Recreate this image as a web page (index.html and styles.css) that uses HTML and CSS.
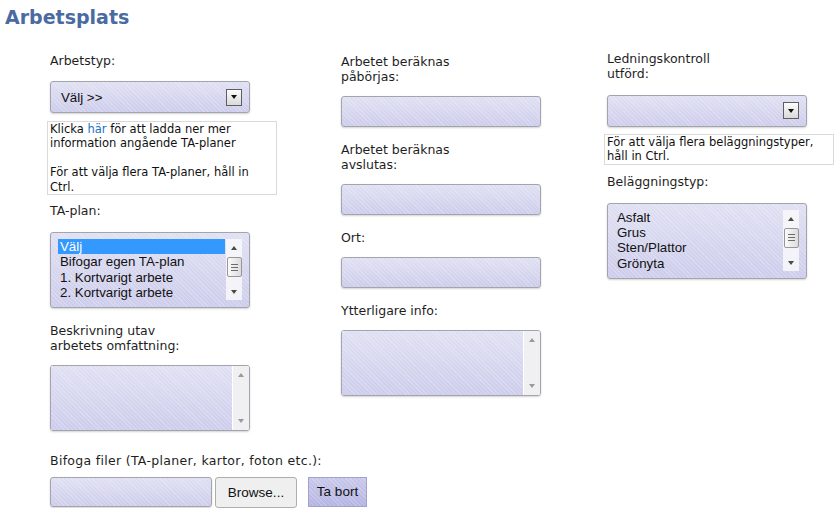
FILE: index.html
```html
<!DOCTYPE html>
<html lang="sv">
<head>
<meta charset="utf-8">
<title>Arbetsplats</title>
<link rel="stylesheet" href="styles.css">
</head>
<body>
<h1 class="title">Arbetsplats</h1>
<div class="form">
  <div class="col col-left">
    <div class="lbl mb13">Arbetstyp:</div>
    <div class="select mb8">
      <span class="select-text">Välj &gt;&gt;</span>
      <span class="drop"><i></i></span>
    </div>
    <div class="info mb8">Klicka <a class="link" href="#">här</a> för att ladda ner mer information angående TA-planer<br><br>För att välja flera TA-planer, håll in Ctrl.</div>
    <div class="lbl mb14">TA-plan:</div>
    <div class="listbox mb15">
      <ul class="options">
        <li class="opt selected">Välj</li>
        <li class="opt">Bifogar egen TA-plan</li>
        <li class="opt">1. Kortvarigt arbete</li>
        <li class="opt">2. Kortvarigt arbete</li>
      </ul>
      <div class="vscroll">
        <span class="arrow up"></span>
        <span class="thumb"><i></i><i></i><i></i></span>
        <span class="arrow down"></span>
      </div>
    </div>
    <div class="lbl mb11">Beskrivning utav arbetets omfattning:</div>
    <div class="textarea mb22">
      <div class="ta-body"></div>
      <div class="ta-scroll"><span class="arrow up light"></span><span class="arrow down light"></span></div>
    </div>
    <div class="lbl lbl-wide mb9">Bifoga filer (TA-planer, kartor, foton etc.):</div>
    <div class="filerow">
      <div class="file-text"></div>
      <div class="browse">Browse...</div>
      <div class="remove">Ta bort</div>
    </div>
  </div>

  <div class="col col-mid">
    <div class="lbl mb12">Arbetet beräknas påbörjas:</div>
    <div class="textinput mb15"></div>
    <div class="lbl mb12">Arbetet beräknas avslutas:</div>
    <div class="textinput mb15"></div>
    <div class="lbl mb12">Ort:</div>
    <div class="textinput mb15"></div>
    <div class="lbl mb12">Ytterligare info:</div>
    <div class="textarea">
      <div class="ta-body"></div>
      <div class="ta-scroll"><span class="arrow up light"></span><span class="arrow down light"></span></div>
    </div>
  </div>

  <div class="col col-right">
    <div class="lbl mb14">Ledningskontroll utförd:</div>
    <div class="select mb7">
      <span class="select-text"></span>
      <span class="drop"><i></i></span>
    </div>
    <div class="info mb9">För att välja flera beläggningstyper, håll in Ctrl.</div>
    <div class="lbl mb14">Beläggningstyp:</div>
    <div class="listbox">
      <ul class="options">
        <li class="opt">Asfalt</li>
        <li class="opt">Grus</li>
        <li class="opt">Sten/Plattor</li>
        <li class="opt">Grönyta</li>
      </ul>
      <div class="vscroll">
        <span class="arrow up"></span>
        <span class="thumb"><i></i><i></i><i></i></span>
        <span class="arrow down"></span>
      </div>
    </div>
  </div>
</div>
</body>
</html>
```
FILE: styles.css
```css
* { box-sizing: border-box; }

body {
  margin: 0;
  background: #ffffff;
  font-family: "DejaVu Sans", Verdana, sans-serif;
  color: #1e1e1e;
}

.title {
  margin: 6px 0 0 5px;
  font-size: 19px;
  line-height: 22px;
  font-weight: bold;
  color: #4a6aa2;
}

.form {
  display: grid;
  grid-template-columns: 291px 266px 236px;
  padding-left: 47px;
  margin-top: 22px;
  align-items: start;
}

.col {
  display: flex;
  flex-direction: column;
  align-items: flex-start;
}
.col-left { padding-top: 3px; }
.col-mid { padding-top: 4px; }
.col-right { padding-top: 0.5px; }

.lbl {
  margin-left: 3px;
  font-size: 12.5px;
  line-height: 15px;
  max-width: 140px;
}
.lbl-wide {
  max-width: none;
  letter-spacing: 0.3px;
}

.mb7 { margin-bottom: 7.5px; }
.mb8 { margin-bottom: 8px; }
.mb9 { margin-bottom: 9px; }
.mb11 { margin-bottom: 11.5px; }
.mb12 { margin-bottom: 12px; }
.mb13 { margin-bottom: 13px; }
.mb14 { margin-bottom: 14px; }
.mb15 { margin-bottom: 15px; }
.mb22 { margin-bottom: 22px; }

.select,
.textinput,
.listbox,
.ta-body,
.file-text {
  background:
    repeating-linear-gradient(45deg, rgba(255,255,255,0.2) 0 1px, rgba(255,255,255,0) 1px 3px),
    linear-gradient(to bottom, #e0e0f3, #cdcdec);
}

.select,
.textinput,
.listbox,
.textarea,
.file-text {
  margin-left: 3px;
  width: 200px;
  border: 1px solid #a4a4ae;
  border-radius: 3px;
  box-shadow: 0 1px 2px rgba(0,0,0,0.18);
}

.select {
  height: 32px;
  display: flex;
  align-items: center;
  padding: 0 7px 0 10px;
}
.select-text {
  flex: 1;
  font-family: "Liberation Sans", Arial, sans-serif;
  font-size: 13.3px;
  color: #111;
}
.drop {
  width: 16px;
  height: 17px;
  border: 1px solid #5e5e5e;
  background: linear-gradient(to bottom, #fcfcfc, #d9d9d9);
  display: flex;
  align-items: center;
  justify-content: center;
}
.drop i {
  width: 0;
  height: 0;
  border-left: 3.5px solid transparent;
  border-right: 3.5px solid transparent;
  border-top: 4px solid #111;
}

.info {
  width: 230px;
  border: 1px solid #dadada;
  padding: 0 2px;
  font-size: 11.5px;
  line-height: 14.4px;
  color: #111;
}
.link { color: #1d6fc4; text-decoration: none; }

.listbox {
  height: 76px;
  padding: 6px 7px 7px 7px;
  display: flex;
}
.options {
  list-style: none;
  margin: 0;
  padding: 0;
  width: 168px;
  font-family: "Liberation Sans", Arial, sans-serif;
  font-size: 13.3px;
  color: #111;
}
.opt {
  height: 15.3px;
  line-height: 15.3px;
  padding-left: 2px;
  white-space: nowrap;
}
.selected {
  background: #3399ff;
  color: #ffffff;
  margin-right: 1px;
}

.vscroll {
  width: 16px;
  height: 61px;
  background: rgba(248,248,250,0.85);
  display: flex;
  flex-direction: column;
  align-items: center;
}
.arrow {
  display: block;
  width: 0;
  height: 0;
  border-left: 3.5px solid transparent;
  border-right: 3.5px solid transparent;
}
.arrow.up {
  border-bottom: 4px solid #4a4a4a;
  margin-top: 7px;
}
.vscroll .arrow.down {
  border-top: 4px solid #4a4a4a;
  margin-top: auto;
  margin-bottom: 6px;
}
.thumb {
  margin-top: 7px;
  width: 15px;
  height: 20px;
  border: 1px solid #979797;
  border-radius: 2px;
  background: linear-gradient(to right, #fafafa, #dcdcdc);
  display: flex;
  flex-direction: column;
  align-items: center;
  justify-content: center;
  gap: 2px;
}
.thumb i {
  display: block;
  width: 7px;
  height: 1px;
  background: #6c6c6c;
}

.textarea {
  height: 66px;
  display: flex;
  overflow: hidden;
}
.ta-body { flex: 1; }
.ta-scroll {
  width: 17px;
  border-left: 1px solid #ffffff;
  background: #f0f0f2;
  display: flex;
  flex-direction: column;
  align-items: center;
  justify-content: space-between;
  padding: 7px 0 7px;
}
.ta-scroll .arrow.up {
  margin-top: 0;
  border-bottom: 4px solid #9a9a9a;
}
.ta-scroll .arrow.down {
  border-top: 4px solid #9a9a9a;
}

.textinput { height: 31px; }

.filerow {
  margin-left: 3px;
  display: flex;
  align-items: flex-start;
  font-family: "Liberation Sans", Arial, sans-serif;
  font-size: 13.5px;
  color: #111;
}
.file-text {
  margin-left: 0;
  width: 162px;
  height: 30px;
}
.browse {
  margin-left: 3px;
  width: 82px;
  height: 31px;
  border: 1px solid #adadad;
  border-radius: 3px;
  background: #efefef;
  display: flex;
  align-items: center;
  justify-content: center;
}
.remove {
  margin-left: 11px;
  width: 59px;
  height: 30px;
  border: 1px solid #a2a2cc;
  background:
    repeating-linear-gradient(45deg, rgba(255,255,255,0.2) 0 1px, rgba(255,255,255,0) 1px 3px),
    linear-gradient(to bottom, #c8c8ec, #b4b4e2);
  display: flex;
  align-items: center;
  justify-content: center;
}
```
